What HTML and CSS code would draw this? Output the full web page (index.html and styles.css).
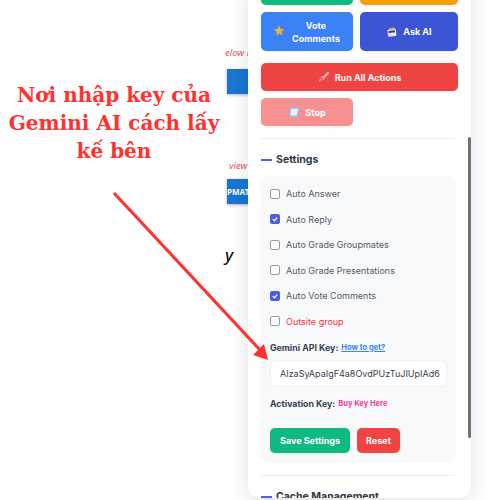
FILE: index.html
```html
<!DOCTYPE html>
<html lang="vi">
<head>
<meta charset="utf-8">
<title>Settings</title>
<link rel="stylesheet" href="styles.css">
</head>
<body>
<div class="stage">
  <div class="bg-note bg-note-1">elow i</div>
  <div class="bg-btn bg-btn-1"></div>
  <div class="bg-note bg-note-2">view</div>
  <div class="bg-btn bg-btn-2">PMATI</div>
  <div class="bg-y">y</div>

  <aside class="panel">
    <div class="panel-inner">
      <div class="grid2">
        <div class="btn green short"></div>
        <div class="btn orange short"></div>
        <div class="btn blue tall">
          <svg class="ico star" viewBox="0 0 12 12"><path fill="#eab52c" d="M6.600.5l1.300 3.100 3.500.1-2.600 2.300 1 3.500-3-1.700-2.900 2 .6-3.500L1.500 4l3.600-.4z"/></svg>
          <span class="vote-label">Vote Comments</span>
        </div>
        <div class="btn indigo tall">
          <svg class="ico" viewBox="0 0 12 12"><path fill="#e8a23a" d="M3 2.200l5-1 1.200 1.500-6 1z"/><rect x="1.600" y="3.400" width="8.600" height="7" rx="1" fill="#e5e7f5" transform="rotate(-6 6 7)"/><rect x="2.800" y="4.600" width="6.200" height="2" fill="#3a3f70" transform="rotate(-6 6 6)"/><path fill="#d9527c" d="M1 5l1-.2.600 5.700-1 .2z"/></svg>
          <span>Ask AI</span>
        </div>
      </div>
      <div class="btn red run">
        <svg class="ico" viewBox="0 0 12 12"><path fill="#f3a6c4" d="M4 6.200L9 1.600c.8-.5 1.600-.6 2-.4.200.6 0 1.400-.5 2L5.800 8z"/><path fill="#f6c453" d="M3.600 8.400L1 11l.8-3.200z"/><path fill="#b9a6e8" d="M3.400 5.600l1.400-.4-1.200 2.600-1.300-.5zM6.400 7.200L6 8.800 4.200 9.600l.4-1.400z"/></svg>
        <span>Run All Actions</span>
      </div>
      <div class="grid2">
        <div class="btn red faded stop">
          <svg class="ico" viewBox="0 0 12 12"><path fill="#8fc0f5" d="M2 1.500h9.500L10 10.800H.8z"/><path fill="#eef3fb" d="M3.300 2.800h6.700L8.900 9.500H2.300z"/></svg>
          <span>Stop</span>
        </div>
      </div>
      <div class="rule rule-top"></div>
      <h3 class="sec-title"><span class="dash"></span>Settings</h3>
      <section class="settings">
        <label class="opt"><span class="cb"></span>Auto Answer</label>
        <label class="opt"><span class="cb on"><svg viewBox="0 0 10 10"><path d="M2.200 5.200l2 2 3.600-4" fill="none" stroke="#fff" stroke-width="1.600"/></svg></span>Auto Reply</label>
        <label class="opt"><span class="cb"></span>Auto Grade Groupmates</label>
        <label class="opt"><span class="cb"></span>Auto Grade Presentations</label>
        <label class="opt"><span class="cb on"><svg viewBox="0 0 10 10"><path d="M2.200 5.200l2 2 3.600-4" fill="none" stroke="#fff" stroke-width="1.600"/></svg></span>Auto Vote Comments</label>
        <label class="opt warn"><span class="cb"></span>Outsite group</label>
        <div class="key-row first"><strong>Gemini API Key:</strong><a class="how">How to get?</a></div>
        <div class="key-input">AIzaSyApaIgF4a8OvdPUzTuJIUpIAd6</div>
        <div class="key-row"><strong>Activation Key:</strong><a class="buy">Buy Key Here</a></div>
        <div class="actions">
          <div class="btn green save">Save Settings</div>
          <div class="btn red reset">Reset</div>
        </div>
      </section>
      <div class="rule rule-bottom"></div>
      <h3 class="sec-title cache"><span class="dash"></span>Cache Management</h3>
    </div>
    <div class="scrollbar"></div>
  </aside>

  <h1 class="note">Nơi nhập key của Gemini AI cách lấy kế bên</h1>
  <svg class="arrow" viewBox="0 0 500 500">
    <line x1="114" y1="193" x2="260" y2="350" stroke="#ff3131" stroke-width="3.200"/>
    <path fill="#ff3131" d="M268 360l-15-5 11-11z"/>
  </svg>
</div>
</body>
</html>
```
FILE: styles.css
```css
* { box-sizing: border-box; }
html, body { margin: 0; padding: 0; background: #fff; }
.stage {
  position: relative;
  width: 500px;
  height: 500px;
  overflow: hidden;
  font-family: Inter, "Noto Sans", sans-serif;
}
.bg-note {
  position: absolute;
  font: italic 9.500px "Noto Sans", sans-serif;
  color: #e8585c;
  white-space: nowrap;
}
.bg-note-1 { left: 225px; top: 46px; }
.bg-note-2 { left: 229px; top: 159px; }
.bg-btn {
  position: absolute;
  left: 227px;
  width: 30px;
  background: #1976d2;
  color: #fff;
  font: bold 8px "Noto Sans", sans-serif;
  box-shadow: 0 1px 3px rgba(0,0,0,.3);
  white-space: nowrap;
  overflow: hidden;
}
.bg-btn-1 { top: 69px; height: 25px; }
.bg-btn-2 { top: 179px; height: 25px; line-height: 25px; }
.bg-y {
  position: absolute;
  left: 225px;
  top: 243px;
  font: italic 500 17px "Noto Sans", sans-serif;
  color: #111;
}
.panel {
  position: absolute;
  left: 248px;
  top: -20px;
  width: 223px;
  height: 518px;
  background: #fff;
  border-radius: 12px;
  box-shadow: 0 4px 20px rgba(0,0,0,.12);
  overflow: hidden;
}
.panel-inner { padding: 0 13px; }
.grid2 {
  display: grid;
  grid-template-columns: 92px 98px;
  column-gap: 7px;
}
.btn {
  display: flex;
  align-items: center;
  justify-content: center;
  gap: 5px;
  color: #fff;
  font-size: 9px;
  font-weight: 700;
  border-radius: 5px;
  box-shadow: 0 1px 3px rgba(0,0,0,.08);
}
.ico { width: 12px; height: 12px; flex: none; }
.star { width: 13px; height: 13px; }
.short { height: 25px; margin-bottom: 7px; }
.green { background: #10b981; }
.orange { background: #f59e0b; }
.blue { background: #3b82f6; }
.indigo { background: #3b55d4; }
.red { background: #ef4444; }
.tall { height: 39px; }
.blue { gap: 3px; padding-left: 2px; }
.vote-label { width: 56px; text-align: center; line-height: 13px; }
.run { height: 28px; width: 197px; margin: 12px 0 7px; }
.faded { background: #f79191; }
.stop { height: 28px; }
.rule { height: 1px; background: #eceef1; width: 194px; }
.rule-top { margin-top: 12px; }
.rule-bottom { margin-top: 12px; }
.sec-title {
  display: flex;
  align-items: center;
  gap: 4px;
  margin: 14px 0 10px;
  font-size: 10.500px;
  font-weight: 700;
  color: #2d3748;
  line-height: 13px;
}
.sec-title.cache { margin-bottom: 0; }
.dash { width: 11px; height: 2px; background: #4a63e7; }
.settings {
  width: 196px;
  height: 287px;
  margin-left: -1px;
  padding: 5px 10px 0 10px;
  background: #f8f9fb;
  border-radius: 8px;
}
.opt {
  display: flex;
  align-items: center;
  gap: 6px;
  height: 25.500px;
  font-size: 9px;
  color: #555b66;
}
.warn { color: #f5333f; }
.cb {
  width: 10px;
  height: 10px;
  background: #fff;
  border: 1px solid #9a9a9a;
  border-radius: 2px;
  flex: none;
  display: flex;
}
.cb.on { background: #4a5ee8; border-color: #4a5ee8; }
.key-row {
  display: flex;
  align-items: center;
  gap: 3px;
  height: 12px;
  font-size: 8.800px;
  color: #374151;
  margin-top: 10px;
}
.key-row.first { margin-top: 7px; }
.how { font-size: 7.600px; font-weight: 700; color: #3b82f6; text-decoration: underline; }
.buy { font-size: 7.500px; font-weight: 700; color: #ec3d9c; }
.key-input {
  height: 27px;
  width: 177px;
  margin-top: 7px;
  padding-left: 9px;
  background: #fff;
  border: 1px solid #eef0f3;
  border-radius: 6px;
  font-size: 9px;
  line-height: 25px;
  color: #374151;
  white-space: nowrap;
  overflow: hidden;
}
.actions { display: flex; gap: 7px; margin-top: 19px; }
.save { width: 80px; height: 25px; }
.reset { width: 43px; height: 25px; }
.scrollbar {
  position: absolute;
  right: 0;
  top: 157px;
  width: 3px;
  height: 301px;
  background: #6b7280;
  border-radius: 2px;
}
.note {
  position: absolute;
  left: 0;
  top: 81px;
  width: 228px;
  margin: 0;
  font: bold 20px/28px "DejaVu Serif", serif;
  color: #ff3131;
  text-align: center;
}
.arrow { position: absolute; left: 0; top: 0; width: 500px; height: 500px; pointer-events: none; }
```
